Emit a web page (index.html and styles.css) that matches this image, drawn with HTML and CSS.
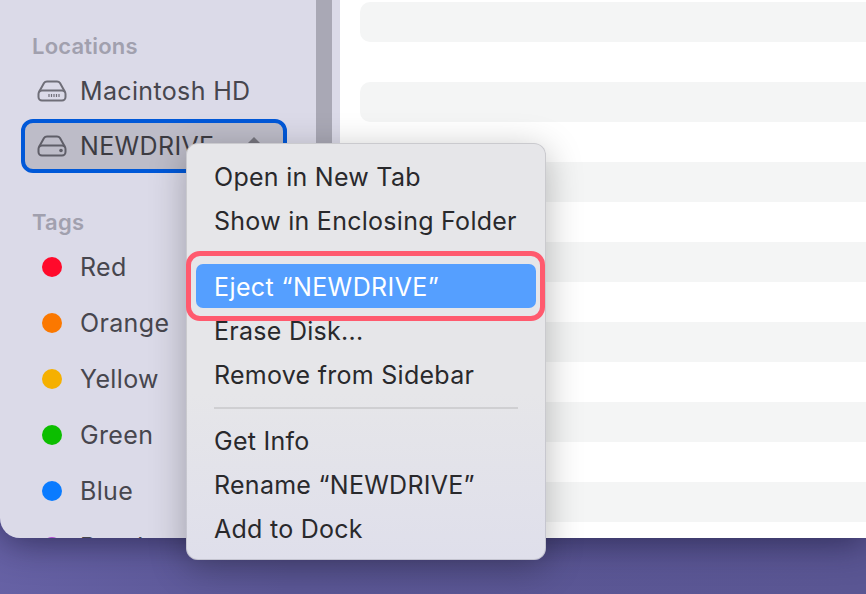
FILE: index.html
```html
<!DOCTYPE html>
<html lang="en">
<head>
<meta charset="UTF-8">
<meta name="viewport" content="width=device-width, initial-scale=1.0">
<title>Finder</title>
<link rel="stylesheet" href="styles.css">
</head>
<body>

<div class="window">
  <div class="sidebar">
    <div class="section-title first">Locations</div>
    <div class="row">
      <svg class="drive" width="30" height="22" viewBox="0 0 30 22" fill="none" stroke="#6f6e78" stroke-width="2">
        <path d="M2 12 L7 3 Q8 1.500 10 1.500 H20 Q22 1.500 23 3 L28 12"/>
        <rect x="1.500" y="10.500" width="27" height="10" rx="3.500"/>
        <path d="M12 14 V17 M14.500 14 V17 M17 14 V17 M19.500 14 V17 M22 14 V17" stroke-width="1.200"/>
      </svg>
      <span>Macintosh HD</span>
    </div>
    <div class="row selected">
      <svg class="drive" width="30" height="22" viewBox="0 0 30 22" fill="none" stroke="#5f5e68" stroke-width="2">
        <path d="M2 12 L7 3 Q8 1.500 10 1.500 H20 Q22 1.500 23 3 L28 12"/>
        <rect x="1.500" y="10.500" width="27" height="10" rx="3.500"/>
        <circle cx="24" cy="15.500" r="1.800" fill="#5f5e68" stroke="none"/>
      </svg>
      <span>NEWDRIVE</span>
      <div class="eject"></div>
    </div>
    <div class="section-title">Tags</div>
    <div class="row tag"><i class="dot red"></i><span>Red</span></div>
    <div class="row tag"><i class="dot orange"></i><span>Orange</span></div>
    <div class="row tag"><i class="dot yellow"></i><span>Yellow</span></div>
    <div class="row tag"><i class="dot green"></i><span>Green</span></div>
    <div class="row tag"><i class="dot blue"></i><span>Blue</span></div>
    <div class="row tag"><i class="dot purple"></i><span>Purple</span></div>
    <div class="scroll-thumb"></div>
  </div>
  <div class="content">
    <div class="stripe"></div>
    <div class="stripe"></div>
    <div class="stripe"></div>
    <div class="stripe"></div>
    <div class="stripe"></div>
    <div class="stripe"></div>
    <div class="stripe"></div>
  </div>
</div>

<div class="menu">
  <div class="item">Open in New Tab</div>
  <div class="item">Show in Enclosing Folder</div>
  <div class="sep"></div>
  <div class="item active">Eject “NEWDRIVE”</div>
  <div class="item">Erase Disk...</div>
  <div class="item">Remove from Sidebar</div>
  <div class="sep"></div>
  <div class="item">Get Info</div>
  <div class="item">Rename “NEWDRIVE”</div>
  <div class="item">Add to Dock</div>
  <div class="callout"></div>
</div>

</body>
</html>
```

FILE: styles.css
```css
html, body {
  height: 100%;
}

body {
  margin: 0;
  overflow: hidden;
  position: relative;
  font-family: Inter, "Noto Sans", sans-serif;
  background: linear-gradient(100deg, #6a65aa 0%, #5b5796 40%, #5a5693 100%);
}

.window {
  display: flex;
  height: 538px;
  overflow: hidden;
  border-bottom-left-radius: 20px;
  box-shadow: 0 4px 36px rgba(20, 16, 50, 0.62);
  position: relative;
}

.sidebar {
  width: 340px;
  flex-shrink: 0;
  position: relative;
  background: #dbdae8;
  padding: 0 0 0 21px;
  box-sizing: border-box;
  color: #47464e;
}

.section-title {
  font-size: 22px;
  font-weight: 600;
  line-height: 24px;
  color: #a1a0ae;
  padding-left: 11px;
  margin-top: 37px;
  margin-bottom: 5px;
  letter-spacing: 0.2px;
}

.section-title.first {
  margin-top: 34px;
}

.row {
  display: flex;
  align-items: center;
  width: 266px;
  height: 56px;
  box-sizing: border-box;
  padding-left: 16px;
  font-size: 25px;
  letter-spacing: 0.35px;
}

.row span {
  margin-left: 13px;
}

.selected {
  height: 54px;
  padding-left: 12px;
  border: 4px solid #0058d8;
  border-radius: 12px;
  background: #bdbcc8;
  color: #3c3b42;
  position: relative;
}

.selected span {
  margin-left: 13px;
}

.eject {
  position: absolute;
  right: 17px;
  top: 14px;
  width: 0;
  height: 0;
  border-left: 12px solid transparent;
  border-right: 12px solid transparent;
  border-bottom: 12px solid #77767f;
}

.tag {
  padding-left: 21px;
}

.tag span {
  margin-left: 18px;
}

.dot {
  width: 20px;
  height: 20px;
  border-radius: 50%;
  flex-shrink: 0;
}

.red { background: #ff0a2b; }
.orange { background: #fb7800; }
.yellow { background: #f5b000; }
.green { background: #0cbe00; }
.blue { background: #0a7bff; }
.purple { background: #b04fd0; }

.scroll-thumb {
  position: absolute;
  left: 316px;
  top: 0;
  width: 16px;
  height: 100%;
  background: #a9a8b5;
}

.content {
  flex: 1;
  background: #fff;
  padding-top: 2px;
}

.stripe {
  height: 40px;
  margin-bottom: 40px;
  margin-left: 20px;
  background: #f4f5f5;
  border-radius: 10px 0 0 10px;
}

.menu {
  position: absolute;
  left: 186px;
  top: 143px;
  width: 360px;
  height: 417px;
  box-sizing: border-box;
  padding: 12px 10px 0 10px;
  background: linear-gradient(180deg, #e6e6e9 0%, #e6e6e9 60%, #dfdfeb 100%);
  border-radius: 12px;
  box-shadow: inset 0 0 0 1px rgba(90, 90, 100, 0.2), 0 8px 36px rgba(0, 0, 0, 0.28);
  color: #29292c;
  font-size: 25px;
}

.item {
  height: 44px;
  line-height: 44px;
  padding-left: 18px;
  border-radius: 7px;
  letter-spacing: 0.27px;
}

.item.active {
  background: #559fff;
  color: #fff;
  line-height: 46px;
  margin-top: -1px;
  margin-bottom: 1px;
  letter-spacing: 0.4px;
}

.sep {
  height: 2px;
  margin: 10px 18px;
  background: #cfcfd2;
}

.callout {
  position: absolute;
  left: 0;
  top: 108px;
  width: 359px;
  height: 70px;
  box-sizing: border-box;
  border: 5px solid #ff5a6e;
  border-radius: 14px;
}
```
